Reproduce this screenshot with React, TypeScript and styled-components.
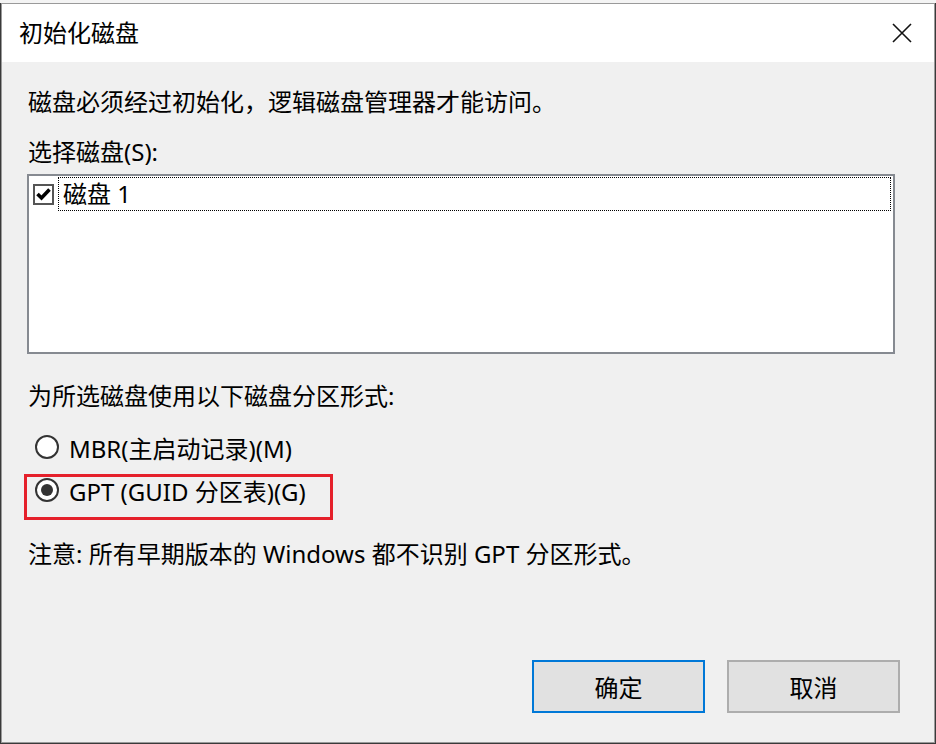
import React from "react";
import styled, { createGlobalStyle } from "styled-components";

const Global = createGlobalStyle`
  html, body { margin: 0; padding: 0; }
  body {
    width: 936px;
    height: 744px;
    overflow: hidden;
    background: #3a3a3a;
    font-family: "Noto Sans", "Noto Sans CJK SC", sans-serif;
    color: #000;
  }
`;

const Page = styled.div`
  width: 936px;
  height: 744px;
  padding: 3px 0 0 1px;
  box-sizing: border-box;
  background: linear-gradient(#f4f4f4 0 3px, #3a3a3a 3px);
`;

const Dialog = styled.div`
  width: 934px;
  height: 740px;
  box-sizing: border-box;
  border: 1px solid #9a9a9a;
  background: #f0f0f0;
  display: flex;
  flex-direction: column;
`;

const TitleBar = styled.div`
  height: 58px;
  flex: none;
  background: #fff;
  display: flex;
  align-items: center;
  padding-left: 17px;
`;

const Title = styled.div`
  flex: 1;
  font-size: 24px;
  line-height: 32px;
`;

const CloseButton = styled.div`
  width: 64px;
  height: 58px;
  display: flex;
  align-items: center;
  justify-content: center;
`;

const Body = styled.div`
  flex: 1;
  display: flex;
  flex-direction: column;
  padding: 24px 0 0 25px;
  font-size: 24px;
`;

const Text = styled.div<{ $mt?: number }>`
  line-height: 32px;
  height: 32px;
  white-space: nowrap;
  margin-top: ${(p) => p.$mt ?? 0}px;
  padding-left: 1px;
`;

const ListBox = styled.div`
  margin-top: 6px;
  width: 868px;
  height: 180px;
  box-sizing: border-box;
  border: 2px solid #868a91;
  background: #fff;
  padding: 1px 2px 0 4px;
`;

const ListRow = styled.div`
  display: flex;
  align-items: center;
  height: 34px;
`;

const CheckBox = styled.div`
  width: 21px;
  height: 21px;
  box-sizing: border-box;
  border: 2px solid #555;
  background: #fff;
  display: flex;
  align-items: center;
  justify-content: center;
  flex: none;
  margin-right: 4px;
`;

const FocusLabel = styled.div`
  flex: 1;
  height: 34px;
  box-sizing: border-box;
  border: 1px dotted #000;
  display: flex;
  align-items: center;
  padding-left: 4px;
  line-height: 32px;
`;

const RadioRow = styled.div<{ $mt: number }>`
  position: relative;
  display: flex;
  align-items: center;
  height: 32px;
  margin-top: ${(p) => p.$mt}px;
  padding-left: 8px;
  white-space: nowrap;
`;

const RadioCircle = styled.div<{ $on?: boolean }>`
  width: 24px;
  height: 24px;
  box-sizing: border-box;
  border-radius: 50%;
  border: 2px solid #333;
  background: #fff;
  margin-right: 10px;
  flex: none;
  display: flex;
  align-items: center;
  justify-content: center;
  &::after {
    content: "";
    display: ${(p) => (p.$on ? "block" : "none")};
    width: 12px;
    height: 12px;
    border-radius: 50%;
    background: #333;
  }
`;

const Highlight = styled.div`
  position: absolute;
  left: -3px;
  top: 0px;
  width: 309px;
  height: 46px;
  box-sizing: border-box;
  border: 3px solid #e5202b;
  pointer-events: none;
`;

const ButtonRow = styled.div`
  margin-top: auto;
  margin-bottom: 29px;
  display: flex;
  gap: 22px;
  padding-left: 505px;
`;

const Button = styled.div<{ $default?: boolean }>`
  width: 173px;
  height: 53px;
  box-sizing: border-box;
  background: #e1e1e1;
  border: ${(p) => (p.$default ? "2px solid #0078d7" : "2px solid #adadad")};
  display: flex;
  align-items: center;
  justify-content: center;
  font-size: 24px;
`;

export default function App() {
  return (
    <>
      <Global />
      <Page>
        <Dialog>
          <TitleBar>
            <Title>初始化磁盘</Title>
            <CloseButton>
              <svg width="20" height="20" viewBox="0 0 20 20">
                <path d="M1 1 L19 19 M19 1 L1 19" stroke="#111" strokeWidth="1.6" fill="none" />
              </svg>
            </CloseButton>
          </TitleBar>
          <Body>
            <Text>磁盘必须经过初始化，逻辑磁盘管理器才能访问。</Text>
            <Text $mt={18}>选择磁盘(S):</Text>
            <ListBox>
              <ListRow>
                <CheckBox>
                  <svg width="15" height="13" viewBox="0 0 15 13">
                    <path d="M1.5 6 L5.5 10 L13.5 1.5" stroke="#000" strokeWidth="3.6" fill="none" />
                  </svg>
                </CheckBox>
                <FocusLabel>磁盘 1</FocusLabel>
              </ListRow>
            </ListBox>
            <Text $mt={26}>为所选磁盘使用以下磁盘分区形式:</Text>
            <RadioRow $mt={19}>
              <RadioCircle />
              MBR(主启动记录)(M)
            </RadioRow>
            <RadioRow $mt={11}>
              <Highlight />
              <RadioCircle $on />
              GPT (GUID 分区表)(G)
            </RadioRow>
            <Text $mt={32}>注意: 所有早期版本的 Windows 都不识别 GPT 分区形式。</Text>
            <ButtonRow>
              <Button $default>确定</Button>
              <Button>取消</Button>
            </ButtonRow>
          </Body>
        </Dialog>
      </Page>
    </>
  );
}
